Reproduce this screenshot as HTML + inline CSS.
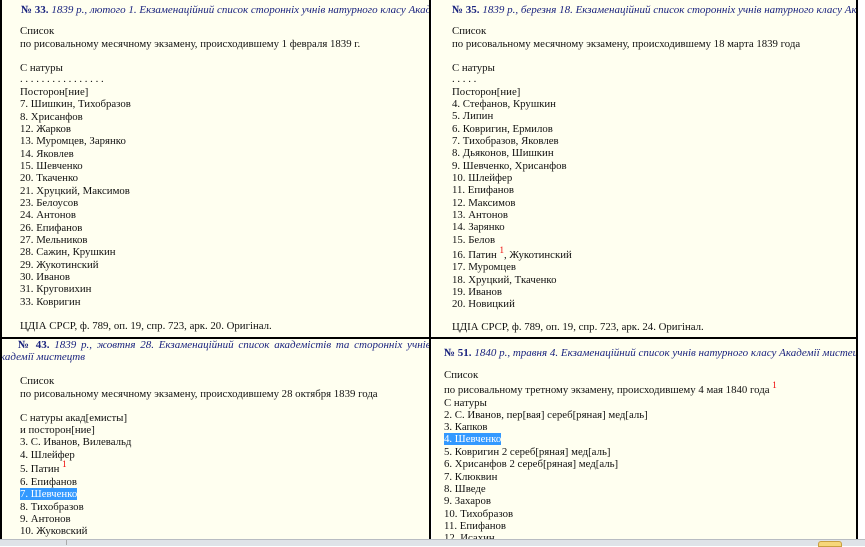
<!DOCTYPE html>
<html><head><meta charset="utf-8"><style>
body{margin:0;width:865px;height:545px;overflow:hidden;background:#fff;position:relative;font-family:"Liberation Serif","DejaVu Serif",serif;font-size:10.8px;color:#111}
.p{position:absolute;background:#fffff0;overflow:hidden}
.l{position:absolute;white-space:nowrap;line-height:13px;margin-top:1px}
.h{color:#1a237e;font-style:italic;font-size:11px}
.h b{font-style:normal}
.s{color:#e00;font-size:9px;position:relative;top:-5px;line-height:0}
.hl{background:#3399ff;color:#fff}
.v{position:absolute;background:#000}
</style></head><body>
<div class="p" style="left:2px;top:0;width:428px;height:337px">
<div class="l h" style="left:19px;top:3px"><b>№ 33.</b> 1839 р., лютого 1. Екзаменаційний список сторонніх учнів натурного класу Академії мистецтв</div>
<div class="l" style="left:18px;top:24px">Список</div>
<div class="l" style="left:18px;top:37px">по рисовальному месячному экзамену, происходившему 1 февраля 1839 г.</div>
<div class="l" style="left:18px;top:61px">С натуры</div>
<div class="l" style="left:18px;top:72px">. . . . . . . . . . . . . . . .</div>
<div class="l" style="left:18px;top:85px">Посторон[ние]</div>
<div class="l" style="left:18px;top:97px">7. Шишкин, Тихобразов</div>
<div class="l" style="left:18px;top:110px">8. Хрисанфов</div>
<div class="l" style="left:18px;top:122px">12. Жарков</div>
<div class="l" style="left:18px;top:134px">13. Муромцев, Зарянко</div>
<div class="l" style="left:18px;top:147px">14. Яковлев</div>
<div class="l" style="left:18px;top:159px">15. Шевченко</div>
<div class="l" style="left:18px;top:171px">20. Ткаченко</div>
<div class="l" style="left:18px;top:184px">21. Хруцкий, Максимов</div>
<div class="l" style="left:18px;top:196px">23. Белоусов</div>
<div class="l" style="left:18px;top:208px">24. Антонов</div>
<div class="l" style="left:18px;top:221px">26. Епифанов</div>
<div class="l" style="left:18px;top:233px">27. Мельников</div>
<div class="l" style="left:18px;top:245px">28. Сажин, Крушкин</div>
<div class="l" style="left:18px;top:258px">29. Жукотинский</div>
<div class="l" style="left:18px;top:270px">30. Иванов</div>
<div class="l" style="left:18px;top:282px">31. Круговихин</div>
<div class="l" style="left:18px;top:295px">33. Ковригин</div>
<div class="l" style="left:18px;top:319px">ЦДІА СРСР, ф. 789, оп. 19, спр. 723, арк. 20. Оригінал.</div>
</div>
<div class="p" style="left:432px;top:0;width:424px;height:337px">
<div class="l h" style="left:20px;top:3px"><b>№ 35.</b> 1839 р., березня 18. Екзаменаційний список сторонніх учнів натурного класу Академії мистецтв</div>
<div class="l" style="left:20px;top:24px">Список</div>
<div class="l" style="left:20px;top:37px">по рисовальному месячному экзамену, происходившему 18 марта 1839 года</div>
<div class="l" style="left:20px;top:61px">С натуры</div>
<div class="l" style="left:20px;top:72px">. . . . .</div>
<div class="l" style="left:20px;top:85px">Посторон[ние]</div>
<div class="l" style="left:20px;top:97px">4. Стефанов, Крушкин</div>
<div class="l" style="left:20px;top:109px">5. Липин</div>
<div class="l" style="left:20px;top:122px">6. Ковригин, Ермилов</div>
<div class="l" style="left:20px;top:134px">7. Тихобразов, Яковлев</div>
<div class="l" style="left:20px;top:146px">8. Дьяконов, Шишкин</div>
<div class="l" style="left:20px;top:159px">9. Шевченко, Хрисанфов</div>
<div class="l" style="left:20px;top:171px">10. Шлейфер</div>
<div class="l" style="left:20px;top:183px">11. Епифанов</div>
<div class="l" style="left:20px;top:196px">12. Максимов</div>
<div class="l" style="left:20px;top:208px">13. Антонов</div>
<div class="l" style="left:20px;top:220px">14. Зарянко</div>
<div class="l" style="left:20px;top:233px">15. Белов</div>
<div class="l" style="left:20px;top:248px">16. Патин <span class="s">1</span>, Жукотинский</div>
<div class="l" style="left:20px;top:260px">17. Муромцев</div>
<div class="l" style="left:20px;top:273px">18. Хруцкий, Ткаченко</div>
<div class="l" style="left:20px;top:285px">19. Иванов</div>
<div class="l" style="left:20px;top:297px">20. Новицкий</div>
<div class="l" style="left:20px;top:320px">ЦДІА СРСР, ф. 789, оп. 19, спр. 723, арк. 24. Оригінал.</div>
</div>
<div class="p" style="left:2px;top:339px;width:428px;height:200px">
<div class="l h" style="left:16px;top:-1px;width:422px;text-align:justify;text-align-last:justify;white-space:normal"><b>№ 43.</b> 1839 р., жовтня 28. Екзаменаційний список академістів та сторонніх учнів в</div>
<div class="l h" style="left:-2px;top:11px">кадемії мистецтв</div>
<div class="l" style="left:18px;top:35px">Список</div>
<div class="l" style="left:18px;top:48px">по рисовальному месячному экзамену, происходившему 28 октября 1839 года</div>
<div class="l" style="left:18px;top:72px">С натуры акад[емисты]</div>
<div class="l" style="left:18px;top:84px">и посторон[ние]</div>
<div class="l" style="left:18px;top:96px">3. С. Иванов, Вилевальд</div>
<div class="l" style="left:18px;top:109px">4. Шлейфер</div>
<div class="l" style="left:18px;top:123px">5. Патин <span class="s">1</span></div>
<div class="l" style="left:18px;top:136px">6. Епифанов</div>
<div class="l" style="left:18px;top:148px"><span class="hl">7. Шевченко</span></div>
<div class="l" style="left:18px;top:161px">8. Тихобразов</div>
<div class="l" style="left:18px;top:173px">9. Антонов</div>
<div class="l" style="left:18px;top:185px">10. Жуковский</div>
</div>
<div class="p" style="left:432px;top:339px;width:424px;height:200px">
<div class="l h" style="left:12px;top:7px"><b>№ 51.</b> 1840 р., травня 4. Екзаменаційний список учнів натурного класу Академії мистецтв</div>
<div class="l" style="left:12px;top:29px">Список</div>
<div class="l" style="left:12px;top:44px">по рисовальному третному экзамену, происходившему 4 мая 1840 года <span class="s">1</span></div>
<div class="l" style="left:12px;top:57px">С натуры</div>
<div class="l" style="left:12px;top:69px">2. С. Иванов, пер[вая] сереб[ряная] мед[аль]</div>
<div class="l" style="left:12px;top:81px">3. Капков</div>
<div class="l" style="left:12px;top:93px"><span class="hl">4. Шевченко</span></div>
<div class="l" style="left:12px;top:106px">5. Ковригин 2 сереб[ряная] мед[аль]</div>
<div class="l" style="left:12px;top:118px">6. Хрисанфов 2 сереб[ряная] мед[аль]</div>
<div class="l" style="left:12px;top:131px">7. Клюквин</div>
<div class="l" style="left:12px;top:143px">8. Шведе</div>
<div class="l" style="left:12px;top:155px">9. Захаров</div>
<div class="l" style="left:12px;top:168px">10. Тихобразов</div>
<div class="l" style="left:12px;top:180px">11. Епифанов</div>
<div class="l" style="left:12px;top:192px">12. Исахин</div>
</div>
<div class="v" style="left:0;top:0;width:2px;height:539px"></div>
<div class="v" style="left:429px;top:0;width:2px;height:539px"></div>
<div class="v" style="left:856px;top:0;width:2px;height:539px"></div>
<div class="v" style="left:0;top:337px;width:858px;height:2px"></div>
<div style="position:absolute;left:0;top:539px;width:865px;height:6px;background:#dfe3e8;border-top:1px solid #b8bcc2"></div>
<div style="position:absolute;left:66px;top:540px;width:1px;height:5px;background:#aaa"></div>
<div style="position:absolute;left:818px;top:541px;width:22px;height:4px;background:#f7d77a;border:1px solid #c9a040;border-radius:3px 3px 0 0"></div>
</body></html>
